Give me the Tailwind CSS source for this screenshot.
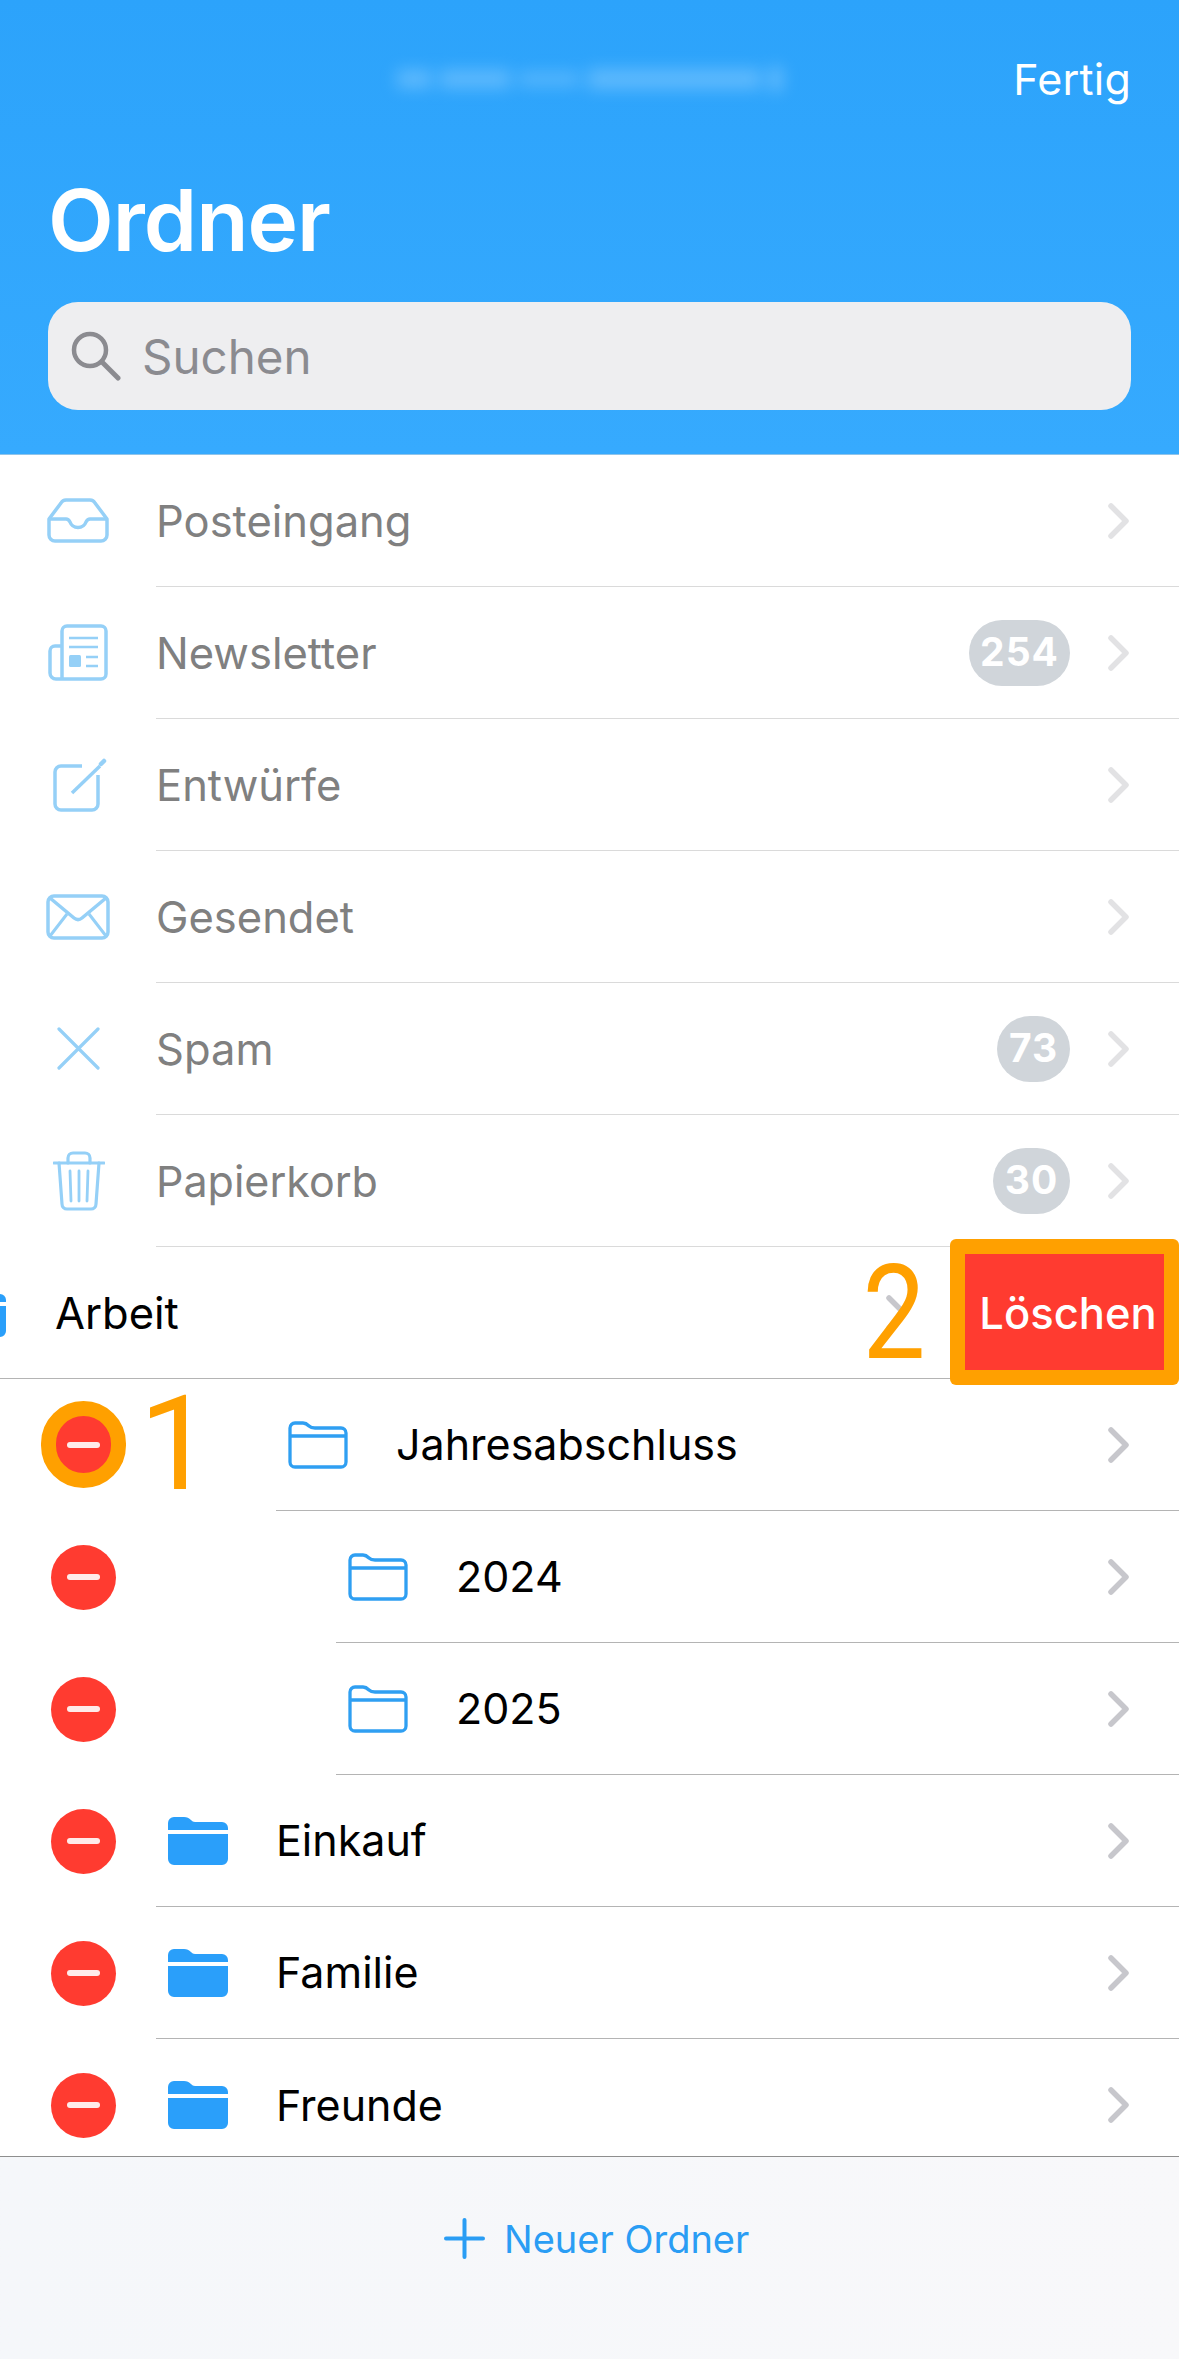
<!DOCTYPE html>
<html lang="de"><head><meta charset="utf-8">
<script src="https://cdn.jsdelivr.net/npm/@tailwindcss/browser@4"></script>
<title>Ordner</title></head>
<body class="bg-white">
<svg class="hidden" width="0" height="0">
<symbol id="chev" viewBox="0 0 21 36"><path d="M3 3 L18 18 L3 33" fill="none" stroke="currentColor" stroke-width="5.5" stroke-linecap="round" stroke-linejoin="round"/></symbol>
<symbol id="fo" viewBox="0 0 60 48"><path d="M2 7a5 5 0 0 1 5-5h8c3 0 4 1 6 3s3 2 6 2h26a5 5 0 0 1 5 5v29a5 5 0 0 1-5 5H7a5 5 0 0 1-5-5Z M2 15H58" fill="none" stroke="#2f9ff2" stroke-width="3.3" stroke-linejoin="round"/></symbol>
<symbol id="ff" viewBox="0 0 60 48"><path d="M0 6a6 6 0 0 1 6-6h10c3 0 5 1 7 3s3 2 6 2h25a6 6 0 0 1 6 6v2H0Z M0 17H60V42a6 6 0 0 1-6 6H6a6 6 0 0 1-6-6Z" fill="#2a9ffa"/></symbol>
</svg>
<div class="relative w-[1179px] h-[2359px] overflow-hidden flex flex-col font-['Inter',sans-serif]">

<header class="h-[455px] shrink-0 flex flex-col bg-linear-to-b from-[#2ca3fb] to-[#36aafe] border-b border-[#8fc4ea] px-[48px]">
  <div class="h-[156px] shrink-0 flex items-center justify-center relative">
    <div class="flex items-center gap-[9px] w-[385px] h-[30px] blur-[8px] opacity-50 mt-[2px]">
      <span class="w-[34px] h-[18px] bg-[#8fcfff]"></span><span class="w-[70px] h-[18px] bg-[#8fcfff]"></span><span class="w-[60px] h-[14px] bg-[#7fc8ff]"></span><span class="flex-1 h-[20px] bg-[#8fcfff]"></span><span class="w-[12px] h-[24px] bg-[#a0d6ff]"></span>
    </div>
    <span class="absolute right-0 top-[55px] text-white text-[43px] leading-[48px] tracking-[0.2px]">Fertig</span>
  </div>
  <h1 class="text-white text-[85.5px] leading-[90px] font-semibold h-[90px] shrink-0 tracking-[-1px] mt-[19px]">Ordner</h1>
  <div class="mt-[37px] h-[108px] w-[1083px] bg-[#eeeef0] rounded-[30px] flex items-center pl-[23px]">
    <svg width="50" height="50" viewBox="0 0 50 50" class="mt-[-1px]"><circle cx="19" cy="19" r="16" fill="none" stroke="#8b8b90" stroke-width="4.5"/><path d="M31 31 L47 47" stroke="#8b8b90" stroke-width="5" stroke-linecap="round"/></svg>
    <span class="ml-[21px] mt-[2px] text-[47.5px] leading-[56px] text-[#8b8b90]">Suchen</span>
  </div>
</header>

<main class="flex-1 overflow-hidden bg-white text-[43px] text-black">
  <!-- Posteingang -->
  <div class="h-[132px] flex">
    <div class="w-[156px] shrink-0 flex items-center justify-center">
      <svg width="64" height="46" viewBox="0 0 64 46" fill="none" stroke="#95d0f7" stroke-width="3.5" stroke-linejoin="round" class="mt-[-1px]"><path d="M3 21 L15 5a6 6 0 0 1 5-3H44a6 6 0 0 1 5 3L61 21V37a6 6 0 0 1-6 6H9a6 6 0 0 1-6-6Z"/><path d="M3 21H20c2 0 3 1 4 3 1.500 4 4.500 5.500 8 5.500s6.500-1.500 8-5.500c1-2 2-3 4-3H61"/></svg>
    </div>
    <div class="flex-1 flex items-center border-b-[1.5px] border-[#dadada] text-[#808080] text-[43.5px]">
      <span class="mt-[2px]">Posteingang</span>
      <svg width="21" height="36" class="ml-auto mr-[50px] text-[#e2e2e4]"><use href="#chev"/></svg>
    </div>
  </div>
  <!-- Newsletter -->
  <div class="h-[132px] flex">
    <div class="w-[156px] shrink-0 flex items-center justify-center">
      <svg width="60" height="58" viewBox="0 0 60 58" fill="none" stroke="#95d0f7" stroke-width="3.500" class="mt-[-1px]"><path d="M14 55V7a5 5 0 0 1 5-5H53a5 5 0 0 1 5 5V50a5 5 0 0 1-5 5H8a6 6 0 0 1-6-6V27a5 5 0 0 1 5-5H14"/><path d="M21 14H50M21 23H50M38 33H50M38 42H50" stroke-width="2.500"/><rect x="21" y="31" width="12" height="12" rx="1.500" fill="#95d0f7" stroke="none"/></svg>
    </div>
    <div class="flex-1 flex items-center border-b-[1.5px] border-[#dadada] text-[#808080] text-[43.5px]">
      <span class="mt-[2px]">Newsletter</span>
      <span class="ml-auto h-[66px] w-[101px] rounded-[33px] bg-[#d0d5da] text-white font-bold text-[39px] flex items-center justify-center tracking-[1px]">254</span>
      <svg width="21" height="36" class="ml-[38px] mr-[50px] text-[#e2e2e4]"><use href="#chev"/></svg>
    </div>
  </div>
  <!-- Entwürfe -->
  <div class="h-[132px] flex">
    <div class="w-[156px] shrink-0 flex items-center justify-center">
      <svg width="54" height="54" viewBox="0 0 54 54" fill="none" stroke="#95d0f7" stroke-width="3.500" class="ml-[3px]"><path d="M29 8H8a6 6 0 0 0-6 6V46a6 6 0 0 0 6 6H39a6 6 0 0 0 6-6V17"/><path d="M19 35 L47 8" stroke-width="3.500"/><path d="M48 6 L51 3" stroke-width="4.500" stroke-linecap="round"/></svg>
    </div>
    <div class="flex-1 flex items-center border-b-[1.5px] border-[#dadada] text-[#808080] text-[43.5px]">
      <span class="mt-[2px]">Entwürfe</span>
      <svg width="21" height="36" class="ml-auto mr-[50px] text-[#e2e2e4]"><use href="#chev"/></svg>
    </div>
  </div>
  <!-- Gesendet -->
  <div class="h-[132px] flex">
    <div class="w-[156px] shrink-0 flex items-center justify-center">
      <svg width="64" height="46" viewBox="0 0 64 46" fill="none" stroke="#95d0f7" stroke-width="3.500" stroke-linejoin="round" class="mt-[-1px]"><rect x="2" y="2" width="60" height="42" rx="6"/><path d="M4 4 L28 24 c2.500 2 5.500 2 8 0 L60 4" /><path d="M4 42 L21 20 M60 42 L43 20" stroke-width="3"/></svg>
    </div>
    <div class="flex-1 flex items-center border-b-[1.5px] border-[#dadada] text-[#808080] text-[43.5px]">
      <span class="mt-[2px]">Gesendet</span>
      <svg width="21" height="36" class="ml-auto mr-[50px] text-[#e2e2e4]"><use href="#chev"/></svg>
    </div>
  </div>
  <!-- Spam -->
  <div class="h-[132px] flex">
    <div class="w-[156px] shrink-0 flex items-center justify-center">
      <svg width="43" height="43" viewBox="0 0 43 43" fill="none" stroke="#95d0f7" stroke-width="3.200" stroke-linecap="round" class="mt-[-1px]"><path d="M2 2 L41 41 M41 2 L2 41"/></svg>
    </div>
    <div class="flex-1 flex items-center border-b-[1.5px] border-[#dadada] text-[#808080] text-[43.5px]">
      <span class="mt-[2px]">Spam</span>
      <span class="ml-auto h-[66px] w-[73px] rounded-[33px] bg-[#d0d5da] text-white font-bold text-[39px] flex items-center justify-center tracking-[1px]">73</span>
      <svg width="21" height="36" class="ml-[38px] mr-[50px] text-[#e2e2e4]"><use href="#chev"/></svg>
    </div>
  </div>
  <!-- Papierkorb -->
  <div class="h-[132px] flex">
    <div class="w-[156px] shrink-0 flex items-center justify-center">
      <svg width="52" height="60" viewBox="0 0 52 60" fill="none" stroke="#95d0f7" stroke-width="3.200" stroke-linecap="round" class="ml-[1px]"><path d="M1 12H51"/><path d="M15 12V7a5 5 0 0 1 5-5H32a5 5 0 0 1 5 5V12"/><path d="M6 12 L9 53a5 5 0 0 0 5 5H38a5 5 0 0 0 5-5L46 12"/><path d="M17 20 L18 50M26 20V50M35 20 L34 50" stroke-width="2.800"/></svg>
    </div>
    <div class="flex-1 flex items-center border-b-[1.5px] border-[#dadada] text-[#808080] text-[43px]">
      <span class="mt-[2px]">Papierkorb</span>
      <span class="ml-auto h-[66px] w-[77px] rounded-[33px] bg-[#d0d5da] text-white font-bold text-[39px] flex items-center justify-center tracking-[1px]">30</span>
      <svg width="21" height="36" class="ml-[38px] mr-[50px] text-[#e2e2e4]"><use href="#chev"/></svg>
    </div>
  </div>
  <!-- Arbeit (swiped) -->
  <div class="h-[132px] flex items-center border-b-[1.5px] border-[#b4b4b4]">
    <svg width="60" height="48" class="shrink-0 ml-[-54px]"><use href="#ff"/></svg>
    <span class="ml-[49px] mt-[2px] text-[43.5px]">Arbeit</span>
    <svg width="21" height="36" class="ml-auto mr-[272px] text-[#c7c7cc]"><use href="#chev"/></svg>
  </div>
  <!-- Jahresabschluss -->
  <div class="h-[132px] flex">
    <div class="w-[276px] shrink-0 flex items-center pl-[51px]">
      <span class="w-[65px] h-[65px] rounded-full bg-[#ff3b30] flex items-center justify-center"><span class="w-[33px] h-[6px] rounded-full bg-white/90"></span></span>
    </div>
    <div class="flex-1 flex items-center border-b-[1.5px] border-[#b4b4b4] pl-[12px]">
      <svg width="60" height="48"><use href="#fo"/></svg>
      <span class="ml-[48px]">Jahresabschluss</span>
      <svg width="21" height="36" class="ml-auto mr-[50px] text-[#c7c7cc]"><use href="#chev"/></svg>
    </div>
  </div>
  <!-- 2024 -->
  <div class="h-[132px] flex">
    <div class="w-[336px] shrink-0 flex items-center pl-[51px]">
      <span class="w-[65px] h-[65px] rounded-full bg-[#ff3b30] flex items-center justify-center"><span class="w-[33px] h-[6px] rounded-full bg-white/90"></span></span>
    </div>
    <div class="flex-1 flex items-center border-b-[1.5px] border-[#b4b4b4] pl-[12px]">
      <svg width="60" height="48"><use href="#fo"/></svg>
      <span class="ml-[48px]">2024</span>
      <svg width="21" height="36" class="ml-auto mr-[50px] text-[#c7c7cc]"><use href="#chev"/></svg>
    </div>
  </div>
  <!-- 2025 -->
  <div class="h-[132px] flex">
    <div class="w-[336px] shrink-0 flex items-center pl-[51px]">
      <span class="w-[65px] h-[65px] rounded-full bg-[#ff3b30] flex items-center justify-center"><span class="w-[33px] h-[6px] rounded-full bg-white/90"></span></span>
    </div>
    <div class="flex-1 flex items-center border-b-[1.5px] border-[#b4b4b4] pl-[12px]">
      <svg width="60" height="48"><use href="#fo"/></svg>
      <span class="ml-[48px]">2025</span>
      <svg width="21" height="36" class="ml-auto mr-[50px] text-[#c7c7cc]"><use href="#chev"/></svg>
    </div>
  </div>
  <!-- Einkauf -->
  <div class="h-[132px] flex">
    <div class="w-[156px] shrink-0 flex items-center pl-[51px]">
      <span class="w-[65px] h-[65px] rounded-full bg-[#ff3b30] flex items-center justify-center"><span class="w-[33px] h-[6px] rounded-full bg-white/90"></span></span>
    </div>
    <div class="flex-1 flex items-center border-b-[1.5px] border-[#b4b4b4] pl-[12px]">
      <svg width="60" height="48"><use href="#ff"/></svg>
      <span class="ml-[48px]">Einkauf</span>
      <svg width="21" height="36" class="ml-auto mr-[50px] text-[#c7c7cc]"><use href="#chev"/></svg>
    </div>
  </div>
  <!-- Familie -->
  <div class="h-[132px] flex">
    <div class="w-[156px] shrink-0 flex items-center pl-[51px]">
      <span class="w-[65px] h-[65px] rounded-full bg-[#ff3b30] flex items-center justify-center"><span class="w-[33px] h-[6px] rounded-full bg-white/90"></span></span>
    </div>
    <div class="flex-1 flex items-center border-b-[1.5px] border-[#b4b4b4] pl-[12px]">
      <svg width="60" height="48"><use href="#ff"/></svg>
      <span class="ml-[48px]">Familie</span>
      <svg width="21" height="36" class="ml-auto mr-[50px] text-[#c7c7cc]"><use href="#chev"/></svg>
    </div>
  </div>
  <!-- Freunde -->
  <div class="h-[132px] flex">
    <div class="w-[156px] shrink-0 flex items-center pl-[51px]">
      <span class="w-[65px] h-[65px] rounded-full bg-[#ff3b30] flex items-center justify-center"><span class="w-[33px] h-[6px] rounded-full bg-white/90"></span></span>
    </div>
    <div class="flex-1 flex items-center pl-[12px]">
      <svg width="60" height="48"><use href="#ff"/></svg>
      <span class="ml-[48px]">Freunde</span>
      <svg width="21" height="36" class="ml-auto mr-[50px] text-[#c7c7cc]"><use href="#chev"/></svg>
    </div>
  </div>
</main>

<footer class="h-[203px] shrink-0 bg-linear-to-r from-[#f5f7fa] to-[#f8f8fa] border-t-[1.5px] border-[#8e8e8e] flex items-start pl-[444px] pt-[61px] gap-[19px] text-[#2a9df4] text-[38px] leading-[42px]">
  <svg width="41" height="41" viewBox="0 0 41 41"><path d="M20.500 2V39M2 20.500H39" stroke="#2a9df4" stroke-width="4" stroke-linecap="round"/></svg>
  <span>Neuer Ordner</span>
</footer>

<!-- Annotations -->
<span class="absolute left-[41px] top-[1401px] w-[85px] h-[87px] rounded-full border-[15px] border-[#ffa000] pointer-events-none"></span>
<span class="absolute left-[139px] top-[1367px] text-[132px] leading-[155px] font-normal text-[#ffa000] font-['Roboto',sans-serif]">1</span>
<span class="absolute left-[857px] top-[1236px] text-[132px] leading-[155px] font-normal text-[#ffa000] font-['Roboto',sans-serif] scale-x-85">2</span>
<div class="absolute left-[950px] top-[1239px] w-[229px] h-[146px] rounded-[6px] bg-[#ffa000] p-[15px]">
  <div class="w-full h-full bg-[#ff3b30] flex items-center justify-center text-white text-[43.5px] font-medium pl-[7px] pt-[3px]">Löschen</div>
</div>
</div>
</body></html>
